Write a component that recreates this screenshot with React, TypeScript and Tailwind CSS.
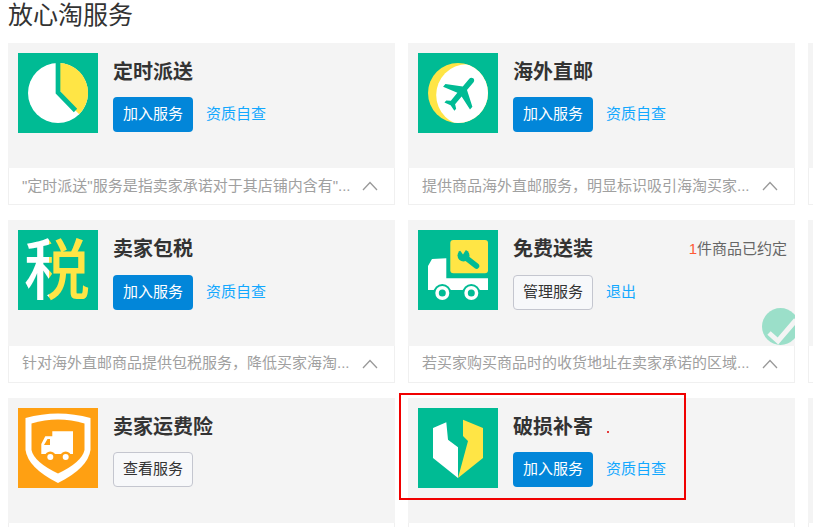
import type { ReactNode } from 'react';

const TEAL = '#00bb94';
const YELLOW = '#ffe545';
const ORANGE = '#ffa012';

function ClockIcon() {
  return (
    <svg viewBox="0 0 80 80" className="w-20 h-20 shrink-0">
      <rect width="80" height="80" fill={TEAL} />
      <circle cx="40" cy="40" r="30" fill="#fff" />
      <path d="M42 10 A30 30 0 0 1 61.2 61.2 L57 57 L42 38 Z" fill={YELLOW} />
      <path d="M40 9 V39.5 L57.5 57.5" fill="none" stroke={TEAL} strokeWidth="4.7" />
    </svg>
  );
}

function PlaneIcon() {
  return (
    <svg viewBox="0 0 80 80" className="w-20 h-20 shrink-0">
      <defs>
        <clipPath id="plane-disc">
          <circle cx="40" cy="40" r="30" />
        </clipPath>
      </defs>
      <rect width="80" height="80" fill={TEAL} />
      <circle cx="40" cy="40" r="30" fill={YELLOW} />
      <circle cx="49" cy="42" r="30.8" fill="#fff" clipPath="url(#plane-disc)" />
      <g transform="translate(43.3 39.5) rotate(40) scale(1.85) translate(-11.5 -12)">
        <path
          fill={TEAL}
          d="M21 16v-2l-8-5V3.5c0-.83-.67-1.5-1.5-1.5S10 2.67 10 3.5V9l-8 5v2l8-2.5V19l-2 1.5V22l3.5-1 3.5 1v-1.5L13 19v-5.5l8 2.5z"
        />
      </g>
    </svg>
  );
}

function TaxIcon() {
  return (
    <svg viewBox="0 0 80 80" className="w-20 h-20 shrink-0">
      <defs>
        {/* one glyph in two colours, split where the left radical ends */}
        <linearGradient id="tax-fill" gradientUnits="userSpaceOnUse" x1="0" y1="0" x2="80" y2="0">
          <stop offset="0.3875" stopColor="#fff" />
          <stop offset="0.3875" stopColor={YELLOW} />
        </linearGradient>
      </defs>
      <rect width="80" height="80" fill={TEAL} />
      <text x="39" y="64" textAnchor="middle" fontSize="66" fontWeight="500" fill="url(#tax-fill)" fontFamily="'Noto Sans CJK SC', sans-serif">
        税
      </text>
    </svg>
  );
}

function DeliveryIcon() {
  return (
    <svg viewBox="0 0 80 80" className="w-20 h-20 shrink-0">
      <rect width="80" height="80" fill={TEAL} />
      <rect x="32.3" y="10" width="37.7" height="33.3" rx="3" fill={YELLOW} />
      {/* wrench */}
      <path d="M47 27 L58.5 36" fill="none" stroke={TEAL} strokeWidth="5.5" strokeLinecap="round" />
      <circle cx="45.5" cy="25.5" r="6" fill={TEAL} />
      <path d="M41 19 L45 24.5 L48.5 19 Z" fill={YELLOW} />
      <path d="M10 36 L14 29 L28.3 28.3 V48.3 H70 V60 H10 Z" fill="#fff" />
      <circle cx="24.3" cy="63" r="9" fill={TEAL} />
      <circle cx="24.3" cy="63" r="7" fill="#fff" />
      <circle cx="24.3" cy="63" r="3.5" fill={TEAL} />
      <circle cx="53.3" cy="63" r="9" fill={TEAL} />
      <circle cx="53.3" cy="63" r="7" fill="#fff" />
      <circle cx="53.3" cy="63" r="3.5" fill={TEAL} />
    </svg>
  );
}

function InsuranceIcon() {
  return (
    <svg viewBox="0 0 80 80" className="w-20 h-20 shrink-0">
      <rect width="80" height="80" fill={ORANGE} />
      <path d="M7.5 10 Q40 1 72.5 10 V42 Q70 60 40 75 Q10 60 7.5 42 Z" fill="#fff" />
      <path d="M13.5 15.5 Q40 7.5 66.5 15.5 V42 Q64 54 40 65.5 Q16 54 13.5 42 Z" fill={ORANGE} />
      <path d="M34.3 23.3 H55 V46 H23.3 V36 L27.3 28.3 H34.3 Z" fill="#fff" />
      <path d="M26 37 L29.5 31 H32 V37 Z" fill={ORANGE} />
      <circle cx="32.3" cy="49" r="5.5" fill={ORANGE} />
      <circle cx="32.3" cy="49" r="3" fill="#fff" />
      <circle cx="47.7" cy="49" r="5.5" fill={ORANGE} />
      <circle cx="47.7" cy="49" r="3" fill="#fff" />
    </svg>
  );
}

function BrokenShieldIcon() {
  return (
    <svg viewBox="0 0 80 80" className="w-20 h-20 shrink-0">
      <rect width="80" height="80" fill={TEAL} />
      <path d="M15 20 L28.3 14.3 L30 31.7 L40 39.3 V70 L15 50 Z" fill="#fff" />
      <path d="M45 11.7 L65 20 V50 L40 70 L50 33 L45 28 Z" fill={YELLOW} />
    </svg>
  );
}

type Service = {
  title: string;
  icon: ReactNode;
  desc?: string;
  action?: 'join' | 'manage' | 'view';
  count?: boolean;
  joined?: boolean;
};

const services: Service[] = [
  { title: '定时派送', icon: <ClockIcon />, desc: '"定时派送"服务是指卖家承诺对于其店铺内含有"...', action: 'join' },
  { title: '海外直邮', icon: <PlaneIcon />, desc: '提供商品海外直邮服务，明显标识吸引海淘买家...', action: 'join' },
  { title: '', icon: null },
  { title: '卖家包税', icon: <TaxIcon />, desc: '针对海外直邮商品提供包税服务，降低买家海淘...', action: 'join' },
  { title: '免费送装', icon: <DeliveryIcon />, desc: '若买家购买商品时的收货地址在卖家承诺的区域...', action: 'manage', count: true, joined: true },
  { title: '', icon: null },
  { title: '卖家运费险', icon: <InsuranceIcon />, desc: '', action: 'view' },
  { title: '破损补寄', icon: <BrokenShieldIcon />, desc: '', action: 'join' },
  { title: '', icon: null },
];

function ServiceCard({ service }: { service: Service }) {
  const { title, icon, desc, action, count, joined } = service;
  return (
    <div className="h-[162.5px] flex flex-col">
      <div className="relative h-[125.5px] bg-[#f4f4f4] flex p-2.5 overflow-hidden">
        {icon}
        {title && (
          <div className="flex-1 ml-[15px]">
            <div className="flex justify-between h-9 pt-0.5 items-center">
              <h3 className="text-[20px] font-bold text-[#333] leading-9">{title}</h3>
              {count && (
                <span className="text-[15px] text-[#666] -mr-0.5">
                  <span className="text-[#ff5a36]">1</span>件商品已约定
                </span>
              )}
            </div>
            <div className="flex items-center mt-[8.5px]">
              {action === 'join' ? (
                <button className="w-20 h-[35px] rounded-sm bg-[#0286d9] text-white text-[15px]">加入服务</button>
              ) : (
                <button className="w-20 h-[35px] rounded-sm bg-[#f7f8fa] border border-[#c4c6cf] text-[#333] text-[15px]">
                  {action === 'manage' ? '管理服务' : '查看服务'}
                </button>
              )}
              {action === 'join' && <a className="ml-[13px] text-[15px] text-[#12a8ff]">资质自查</a>}
              {action === 'manage' && <a className="ml-[13px] text-[15px] text-[#12a8ff]">退出</a>}
            </div>
          </div>
        )}
        {joined && (
          <svg viewBox="0 0 37 37" className="absolute left-[354px] top-[87.5px] w-[37px] h-[37px]">
            <circle cx="18.5" cy="18.5" r="18.5" fill="#9bdfc9" />
            <path d="M7 25 L16 33 L34 12" fill="none" stroke="#f4f4f4" strokeWidth="5" />
          </svg>
        )}
      </div>
      <div className="h-[37px] bg-white border border-[#f0f0f0] border-t-0 flex items-center pl-[13px] pr-4 justify-between">
        <span className="text-[15px] text-[#a0a0a0] whitespace-nowrap">{desc}</span>
        <svg viewBox="0 0 16 10" className="w-4 h-2.5 shrink-0" fill="none" stroke="#999" strokeWidth="1.3">
          <path d="M1 9 L8 1.5 L15 9" />
        </svg>
      </div>
    </div>
  );
}

export default function App() {
  return (
    <div className="relative w-[813px] h-[527px] overflow-hidden bg-white font-['Liberation_Sans','Noto_Sans_CJK_SC',sans-serif]">
      <h2 className="pl-2 h-[42.5px] text-[25px] leading-[30px] text-[#333]">放心淘服务</h2>
      <div className="grid grid-cols-[387px_387px_387px] gap-x-[13px] gap-y-[15px] pl-2">
        {services.map((service, i) => (
          <ServiceCard key={i} service={service} />
        ))}
      </div>
      {/* annotation drawn over the page */}
      <div className="absolute left-[399px] top-[393px] w-[287px] h-[107px] border-2 border-[#f00000]" />
      <div className="absolute left-[607px] top-[431px] w-0.5 h-0.5 rounded-full bg-[#e00000]" />
    </div>
  );
}
